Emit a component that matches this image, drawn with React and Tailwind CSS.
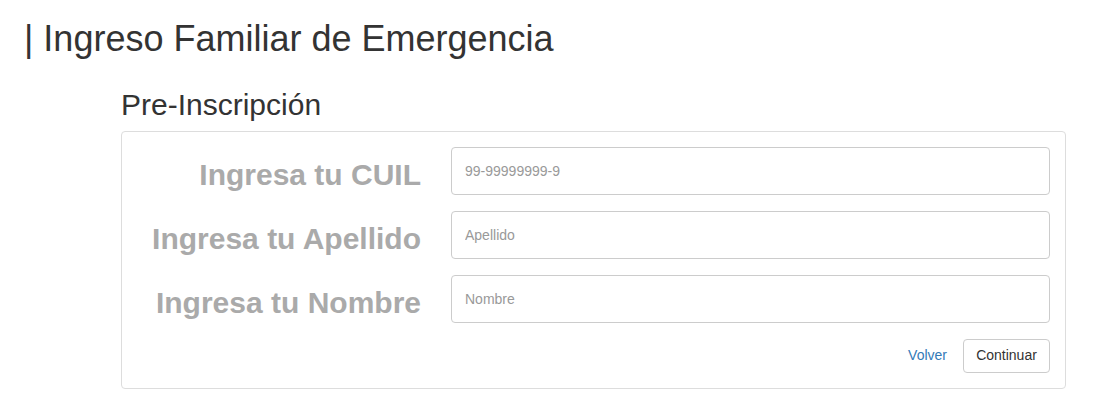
import React from "react";

const fields = [
  { label: "Ingresa tu CUIL", placeholder: "99-99999999-9" },
  { label: "Ingresa tu Apellido", placeholder: "Apellido" },
  { label: "Ingresa tu Nombre", placeholder: "Nombre" },
];

export default function App() {
  return (
    <div
      className="w-[1106px] h-[414px] bg-white text-[#333333] overflow-hidden"
      style={{ fontFamily: '"Liberation Sans", Arial, sans-serif' }}
    >
      <h1 className="pl-[24px] pt-[19px] text-[36px] leading-[39.6px] font-normal text-[#333333]">
        | Ingreso Familiar de Emergencia
      </h1>
      <div className="ml-[121px] w-[945px]">
        <h2 className="mt-[29px] mb-[10px] text-[30px] leading-[33px] font-normal text-[#333333]">
          Pre-Inscripción
        </h2>
        <div className="border border-[#dddddd] rounded-[4px] px-[15px] pt-[15px] pb-[15px]">
          <div className="flex flex-col gap-[16px]">
            {fields.map((f) => (
              <div key={f.label} className="flex h-[48px]">
                <div className="w-[284px] h-[48px] pt-[7px] text-right text-[30px] font-bold leading-[41px] text-[#aaaaaa] whitespace-nowrap">
                  {f.label}
                </div>
                <input
                  type="text"
                  placeholder={f.placeholder}
                  className="ml-[30px] w-[599px] h-[48px] border border-[#cccccc] rounded-[4px] px-[13px] text-[14px] text-[#555555] placeholder:text-[#999999] outline-none"
                  style={{ fontFamily: '"Liberation Sans", Arial, sans-serif' }}
                />
              </div>
            ))}
          </div>
          <div className="flex justify-end items-center mt-[16px]">
            <button className="px-[12px] h-[34px] text-[14px] text-[#337ab7] bg-transparent">
              Volver
            </button>
            <button className="ml-[4px] px-[12px] h-[34px] w-[87px] text-[14px] text-[#333333] bg-white border border-[#cccccc] rounded-[4px]">
              Continuar
            </button>
          </div>
        </div>
      </div>
    </div>
  );
}
